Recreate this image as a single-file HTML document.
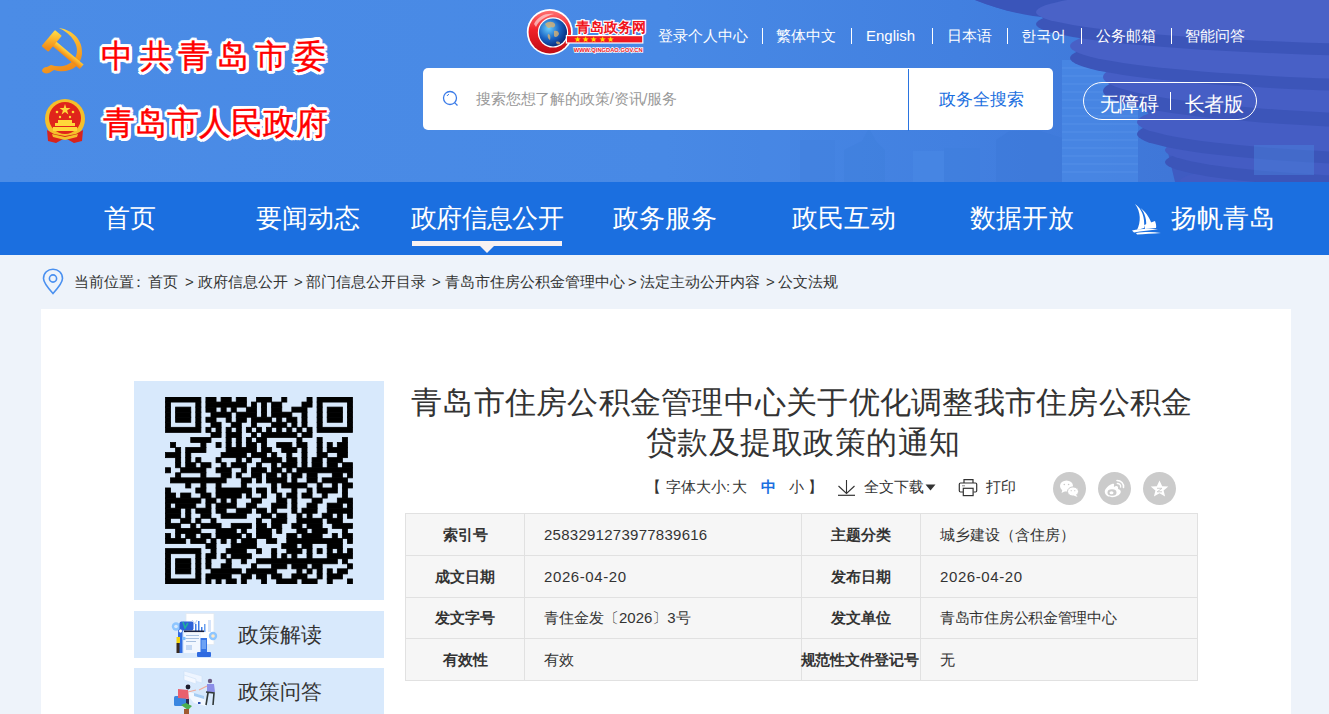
<!DOCTYPE html>
<html><head><meta charset="utf-8">
<style>
*{margin:0;padding:0;box-sizing:border-box}
html,body{width:1329px;height:714px;overflow:hidden;background:#eef3fa;font-family:"Liberation Sans",sans-serif;color:#333}
.abs{position:absolute}
#hdr{position:absolute;left:0;top:0;width:1329px;height:182px;background:#4a8be6;overflow:hidden}
#nav{position:absolute;left:0;top:182px;width:1329px;height:73px;background:#1b6fe0}
.nv{position:absolute;top:0;height:73px;line-height:73px;color:#fff;font-size:25.5px;text-align:center;white-space:nowrap}
.toplink{position:absolute;top:27px;font-size:15px;line-height:18px;color:#fff;white-space:nowrap}
.sep{position:absolute;top:28px;width:1px;height:16px;background:#fff}
.cr{position:absolute;top:273px;font-size:15px;line-height:18px;color:#333;white-space:nowrap}
#crumb{position:absolute;left:74px;top:272px;font-size:15px;line-height:18px;color:#333;white-space:nowrap}
#panel{position:absolute;left:41px;top:309px;width:1250px;height:405px;background:#fff}
#qr{position:absolute;left:134px;top:381px;width:250px;height:219px;background:#d8e9fc}
.btn{position:absolute;left:134px;width:250px;height:47px;background:#d8e9fc}
.btn span{position:absolute;left:104px;top:0;line-height:47px;font-size:21px;color:#333}
.tt{position:absolute;font-size:31px;line-height:40px;color:#333;white-space:nowrap}
#title{position:absolute;left:401px;top:383px;width:800px;text-align:center;font-size:31.25px;line-height:40px;color:#333}
.tl{position:absolute;top:478px;font-size:15px;line-height:18px;color:#333;white-space:nowrap}
#tools{position:absolute;top:478px;font-size:15px;line-height:18px;color:#333;white-space:nowrap}
.share{position:absolute;top:472px;width:33px;height:33px;border-radius:50%;background:#cbcbcb}
table{position:absolute;left:405px;top:513px;width:793px;border-collapse:collapse;background:#f6f6f6}
td{border:1px solid #e1e1e1;height:42px;line-height:20px;font-size:15px;color:#333;padding:0;white-space:nowrap;overflow:visible}
td.l{text-align:center;font-weight:bold}
tr.r3 td{height:41px}
td.v{padding-left:19px}
.logo1{position:absolute;left:101px;top:36px;font-size:31.5px;line-height:40px;color:#f00;-webkit-text-stroke:0.4px #f00;letter-spacing:6.6px;white-space:nowrap;text-shadow:3px 0 0 #fff,-3px 0 0 #fff,0 3px 0 #fff,0 -3px 0 #fff,2.2px 2.2px 0 #fff,-2.2px -2.2px 0 #fff,2.2px -2.2px 0 #fff,-2.2px 2.2px 0 #fff,1.5px 2.8px 0 #fff,-1.5px 2.8px 0 #fff,1.5px -2.8px 0 #fff,-1.5px -2.8px 0 #fff,2.8px 1.5px 0 #fff,-2.8px 1.5px 0 #fff,2.8px -1.5px 0 #fff,-2.8px -1.5px 0 #fff,0 0 2px #fff}
.logo2{position:absolute;left:103px;top:103px;font-size:31.5px;line-height:40px;color:#f00;-webkit-text-stroke:0.4px #f00;letter-spacing:0.1px;white-space:nowrap;text-shadow:3px 0 0 #fff,-3px 0 0 #fff,0 3px 0 #fff,0 -3px 0 #fff,2.2px 2.2px 0 #fff,-2.2px -2.2px 0 #fff,2.2px -2.2px 0 #fff,-2.2px 2.2px 0 #fff,1.5px 2.8px 0 #fff,-1.5px 2.8px 0 #fff,1.5px -2.8px 0 #fff,-1.5px -2.8px 0 #fff,2.8px 1.5px 0 #fff,-2.8px 1.5px 0 #fff,2.8px -1.5px 0 #fff,-2.8px -1.5px 0 #fff,0 0 2px #fff}
#search{position:absolute;left:423px;top:68px;width:630px;height:62px;background:#fff;border-radius:5px}
#search .ph{position:absolute;left:53px;top:0;line-height:62px;font-size:15px;letter-spacing:-0.15px;color:#999;white-space:nowrap}
#search .sbtn{position:absolute;left:485px;top:1px;width:145px;height:62px;border-left:1px solid #2a74e0;line-height:62px;text-align:center;font-size:17px;color:#1b6fe0;white-space:nowrap}
#pill{position:absolute;left:1083px;top:82px;width:174px;height:38px;border:1px solid #fff;border-radius:19px}
#pill span{position:absolute;top:3px;line-height:36px;font-size:20px;letter-spacing:-0.6px;color:#fff;white-space:nowrap}
#pill i{position:absolute;left:86px;top:9px;width:1px;height:18px;background:#fff}
</style></head><body>
<div id="hdr">
<svg class="abs" style="left:0;top:0" width="1329" height="182" viewBox="0 0 1329 182">
<defs>
<linearGradient id="hg" x1="0" y1="0" x2="1" y2="0">
<stop offset="0" stop-color="#4b8ce6"/><stop offset="0.5" stop-color="#4889e5"/><stop offset="0.72" stop-color="#4280e0"/><stop offset="1" stop-color="#3d70d2"/>
</linearGradient>
<linearGradient id="tw" x1="0" y1="0" x2="1" y2="0.3">
<stop offset="0" stop-color="#4a66cc"/><stop offset="1" stop-color="#3f5cc0"/>
</linearGradient>
<linearGradient id="face" x1="0" y1="0" x2="1" y2="0">
<stop offset="0" stop-color="#5a7ad8"/><stop offset="0.6" stop-color="#5070d2"/><stop offset="1" stop-color="#4a66c8"/>
</linearGradient>
</defs>
<rect width="1329" height="182" fill="url(#hg)"/>
<!-- buildings -->
<g>
<path d="M844 182 V150 L862 141 L869 128 L876 141 L885 150 V182Z" fill="#3f7edb" opacity="0.45"/>
<rect x="913" y="151" width="31" height="31" fill="#4a8ae6" opacity="0.5"/>
<rect x="944" y="148" width="36" height="34" fill="#3f7edb" opacity="0.4"/>
<path d="M996 182 V140 L1010 131 H1040 L1062 138 V182Z" fill="#3c78d8" opacity="0.5"/>
<rect x="760" y="130" width="30" height="52" fill="#4a8ae6" opacity="0.35"/>
<rect x="800" y="140" width="35" height="42" fill="#3f7edb" opacity="0.3"/>
</g>
<!-- tower -->
<path d="M975 0 C995 8 1015 14 1036 14 L1075 35 L1110 60 L1140 100 L1165 140 L1175 182 H1329 V0Z" fill="#3f5bc1"/>
<rect x="1062" y="60" width="76" height="122" fill="#4d8eea" opacity="0.55"/>
<g stroke="#6aa2f0" stroke-width="1" opacity="0.35"><path d="M1062 68 H1138 M1062 76 H1138 M1062 84 H1138 M1062 92 H1138 M1062 100 H1138 M1062 108 H1138 M1062 116 H1138 M1062 124 H1138 M1062 132 H1138 M1062 140 H1138 M1062 148 H1138 M1062 156 H1138 M1062 164 H1138 M1062 172 H1138"/></g>
<path d="M975 0 C1000 10 1025 16 1050 18 C1100 20 1200 14 1329 2 V0Z" fill="#3a55ba"/>
<ellipse cx="1520" cy="191.0" rx="340" ry="26" fill="#3c55b9"/>
<ellipse cx="1520" cy="181.0" rx="340" ry="26" fill="#435bc2"/>
<ellipse cx="1520" cy="162.0" rx="355" ry="30" fill="#3c55b9"/>
<ellipse cx="1520" cy="150.0" rx="355" ry="30" fill="#445cc3"/>
<ellipse cx="1520" cy="134.0" rx="383" ry="34" fill="#3c55b9"/>
<ellipse cx="1520" cy="122.0" rx="383" ry="34" fill="#455dc4"/>
<ellipse cx="1520" cy="91.0" rx="417" ry="40" fill="#3c55b9"/>
<ellipse cx="1520" cy="77.0" rx="417" ry="40" fill="#465ec5"/>
<ellipse cx="1520" cy="58.0" rx="450" ry="36" fill="#3c55b9"/>
<ellipse cx="1520" cy="46.0" rx="450" ry="36" fill="#4860c6"/>
<ellipse cx="1520" cy="24.0" rx="484" ry="34" fill="#3c55b9"/>
<ellipse cx="1520" cy="12.0" rx="484" ry="34" fill="#4a62c7"/>
<rect x="1254" y="145" width="60" height="30" fill="#4a80dc" opacity="0.5"/>
</svg>
<!-- party emblem -->
<svg class="abs" style="left:40px;top:26px" width="46" height="48" viewBox="0 0 46 48">
<defs><linearGradient id="gold" x1="0" y1="0" x2="0.3" y2="1"><stop offset="0" stop-color="#ffe04a"/><stop offset="0.5" stop-color="#fcb52c"/><stop offset="1" stop-color="#f08c1a"/></linearGradient></defs>
<path d="M19 2 C33 4 43 14 42 28 C41 40 30 47 18 45 L 14 44 L 9 47 C6 48 3 47 2 45 C2 43 4 41 7 41 L11 39 C20 42 32 40 36 30 C40 20 32 8 19 2 Z" fill="url(#gold)"/>
<g transform="translate(11 15) rotate(40)"><rect x="0" y="-3" width="40" height="6" fill="url(#gold)"/><rect x="-4" y="-11" width="9" height="21" rx="1" fill="url(#gold)"/></g>
</svg>
<!-- national emblem -->
<svg class="abs" style="left:44px;top:98px" width="42" height="46" viewBox="0 0 42 46">
<circle cx="21" cy="21" r="20" fill="#f5c02a"/>
<circle cx="21" cy="20" r="16" fill="#e0251b"/>
<polygon points="21,6 22.3,10 26.5,10 23.1,12.4 24.4,16.4 21,14 17.6,16.4 18.9,12.4 15.5,10 19.7,10" fill="#ffd83a"/>
<circle cx="13" cy="14" r="1.3" fill="#ffd83a"/><circle cx="29" cy="14" r="1.3" fill="#ffd83a"/>
<circle cx="16" cy="19" r="1.2" fill="#ffd83a"/><circle cx="26" cy="19" r="1.2" fill="#ffd83a"/>
<rect x="11" y="25" width="20" height="3" fill="#ffd83a"/><rect x="14" y="22" width="14" height="3" fill="#ffd83a"/>
<rect x="9" y="29" width="24" height="4" fill="#ffd83a"/>
<path d="M3 32 L10 36 L21 38 L32 36 L39 32 L38 43 L30 45 L21 40 L12 45 L4 43 Z" fill="#d8231b"/>
<path d="M8 36 L21 39 L34 36 L33 39 L21 42 L9 39 Z" fill="#f5c02a"/>
</svg>
<div class="logo1">中共青岛市委</div>
<div class="logo2">青岛市人民政府</div>
<!-- qingdao gov logo -->
<svg class="abs" style="left:526px;top:6px" width="124" height="54" viewBox="0 0 124 54">
<defs><radialGradient id="globe" cx="0.35" cy="0.35" r="0.7"><stop offset="0" stop-color="#6ad0ff"/><stop offset="0.55" stop-color="#1a64c4"/><stop offset="1" stop-color="#082a78"/></radialGradient>
<linearGradient id="ring" x1="0" y1="0" x2="0" y2="1"><stop offset="0" stop-color="#ff7070"/><stop offset="0.45" stop-color="#f02028"/><stop offset="1" stop-color="#c00c14"/></linearGradient></defs>
<circle cx="23.8" cy="26.1" r="23" fill="#fff"/>
<circle cx="23.8" cy="26.1" r="21.3" fill="url(#ring)"/>
<path d="M8 18 C12 10 20 7 28 8 C20 10 13 14 10 21Z" fill="#fff" opacity="0.55"/>
<circle cx="27" cy="26.4" r="15.2" fill="#fff"/>
<circle cx="27" cy="26.4" r="14" fill="url(#globe)"/>
<path d="M19 18 C22 15 27 15 29 18 C30 21 27 22 25 21 C23 23 21 22 19 18Z M28 25 C30 24 33 25 33 28 C32 31 29 32 28 30Z M22 28 C24 28 25 31 24 34 C22 33 21 30 22 28Z M30 36 C32 35 35 36 34 38 C32 39 30 38 30 36Z" fill="#d8b070" opacity="0.8"/>
<rect x="40.4" y="29.6" width="76.4" height="7.4" fill="#f01820" stroke="#fff" stroke-width="1.2"/>
<text x="49.5" y="26.3" font-size="14" font-weight="bold" fill="#f0141c" stroke="#fff" stroke-width="2.2" paint-order="stroke" style="font-family:'Liberation Sans',sans-serif">青岛政务网</text>
<text x="47.5" y="35.8" font-size="8" fill="#ffe000" letter-spacing="1.4" style="font-family:'Liberation Sans',sans-serif">★★★★★</text>
<text x="47.7" y="45.5" font-size="6" fill="#f0141c" font-weight="bold" stroke="#fff" stroke-width="1.4" paint-order="stroke" style="font-family:'Liberation Sans',sans-serif" textLength="69" lengthAdjust="spacingAndGlyphs">WWW.QINGDAO.GOV.CN</text>
</svg>
<div class="toplink" style="left:658px">登录个人中心</div><div class="sep" style="left:762px"></div>
<div class="toplink" style="left:776px">繁体中文</div><div class="sep" style="left:851px"></div>
<div class="toplink" style="left:866px">English</div><div class="sep" style="left:932px"></div>
<div class="toplink" style="left:947px">日本语</div><div class="sep" style="left:1007px"></div>
<div class="toplink" style="left:1021px">한국어</div><div class="sep" style="left:1081px"></div>
<div class="toplink" style="left:1096px">公务邮箱</div><div class="sep" style="left:1171px"></div>
<div class="toplink" style="left:1185px">智能问答</div>
<div id="search">
<svg class="abs" style="left:19px;top:22px" width="18" height="18" viewBox="0 0 18 18"><circle cx="8" cy="8" r="6.5" fill="none" stroke="#3a7be8" stroke-width="1.3"/><path d="M12.6 12.6 L15.5 15.5" stroke="#3a7be8" stroke-width="1.3"/><path d="M5 6 A3.5 3.5 0 0 1 7 4.3" stroke="#3a7be8" stroke-width="1" fill="none"/></svg>
<div class="ph">搜索您想了解的政策/资讯/服务</div>
<div class="sbtn">政务全搜索</div>
</div>
<div id="pill"><span style="left:16px">无障碍</span><i></i><span style="left:101px">长者版</span></div>
</div>
<div id="nav">
  <div class="nv" style="left:41px;width:178px">首页</div>
  <div class="nv" style="left:219px;width:178px">要闻动态</div>
  <div class="nv" style="left:398px;width:178px;letter-spacing:-0.7px">政府信息公开</div>
  <div class="abs" style="left:412px;top:59px;width:150px;height:5px;background:#f7f1f2"></div>
  <svg class="abs" style="left:479px;top:63px" width="16" height="8" viewBox="0 0 16 8"><path d="M0 0 H16 L8 8Z" fill="#f7f1f2"/></svg>
  <div class="nv" style="left:576px;width:178px">政务服务</div>
  <div class="nv" style="left:755px;width:178px">政民互动</div>
  <div class="nv" style="left:933px;width:178px">数据开放</div>
  <div class="nv" style="left:1171px;width:auto">扬帆青岛</div>
  <svg class="abs" style="left:1131px;top:21px" width="32" height="32" viewBox="0 0 32 32">
  <path d="M4 1 C11 6 14 14 13 25 L6 27 C10 19 10 9 4 1Z" fill="#fff"/>
  <path d="M9.5 5 C16 10 20 17 21 23 L15 25 C16 17 14 10 9.5 5Z" fill="#fff"/>
  <path d="M13 22 L24 18 C25 21 25.5 23 25 25 L14 26Z" fill="#fff"/>
  <path d="M1 27.5 C8 26 18 25 27 26.5 C20 27 10 28 3 29.5Z" fill="#fff"/>
  <path d="M5 30 C12 29 21 28.5 30 30 C22 30.5 13 31 6 31.5Z" fill="#fff"/>
  </svg>
</div>
<div class="cr" style="left:74px">当前位置</div><div class="cr" style="left:131px">：</div><div class="cr" style="left:148px">首页</div><div class="cr" style="left:185px">&gt;</div><div class="cr" style="left:198px">政府信息公开</div><div class="cr" style="left:294px">&gt;</div><div class="cr" style="left:306px">部门信息公开目录</div><div class="cr" style="left:432px">&gt;</div><div class="cr" style="left:445px">青岛市住房公积金管理中心</div><div class="cr" style="left:628px">&gt;</div><div class="cr" style="left:640px">法定主动公开内容</div><div class="cr" style="left:766px">&gt;</div><div class="cr" style="left:778px">公文法规</div><svg class="abs" style="left:41px;top:268px" width="24" height="27" viewBox="0 0 24 27"><path d="M12 25.5 C7 20 2.5 15 2.5 10.5 C2.5 5 6.8 1.2 12 1.2 C17.2 1.2 21.5 5 21.5 10.5 C21.5 15 17 20 12 25.5Z" fill="none" stroke="#4a90f0" stroke-width="1.6"/><circle cx="12" cy="10.5" r="3.6" fill="none" stroke="#4a90f0" stroke-width="1.6"/></svg>
<div id="panel"></div>
<div id="qr"></div>
<svg class="abs" style="left:165px;top:397px" width="188" height="187" viewBox="0 0 37 37"><g fill="#000" stroke="#000" stroke-width="0.16"><rect x="0" y="0" width="7" height="1"/><rect x="8" y="0" width="2" height="1"/><rect x="11" y="0" width="2" height="1"/><rect x="14" y="0" width="2" height="1"/><rect x="18" y="0" width="3" height="1"/><rect x="23" y="0" width="1" height="1"/><rect x="28" y="0" width="1" height="1"/><rect x="30" y="0" width="7" height="1"/><rect x="0" y="1" width="1" height="1"/><rect x="6" y="1" width="1" height="1"/><rect x="8" y="1" width="8" height="1"/><rect x="17" y="1" width="1" height="1"/><rect x="19" y="1" width="1" height="1"/><rect x="21" y="1" width="2" height="1"/><rect x="27" y="1" width="2" height="1"/><rect x="30" y="1" width="1" height="1"/><rect x="36" y="1" width="1" height="1"/><rect x="0" y="2" width="1" height="1"/><rect x="2" y="2" width="3" height="1"/><rect x="6" y="2" width="1" height="1"/><rect x="8" y="2" width="2" height="1"/><rect x="11" y="2" width="1" height="1"/><rect x="13" y="2" width="1" height="1"/><rect x="16" y="2" width="2" height="1"/><rect x="19" y="2" width="1" height="1"/><rect x="21" y="2" width="2" height="1"/><rect x="25" y="2" width="3" height="1"/><rect x="30" y="2" width="1" height="1"/><rect x="32" y="2" width="3" height="1"/><rect x="36" y="2" width="1" height="1"/><rect x="0" y="3" width="1" height="1"/><rect x="2" y="3" width="3" height="1"/><rect x="6" y="3" width="1" height="1"/><rect x="9" y="3" width="4" height="1"/><rect x="14" y="3" width="4" height="1"/><rect x="19" y="3" width="1" height="1"/><rect x="21" y="3" width="4" height="1"/><rect x="27" y="3" width="1" height="1"/><rect x="30" y="3" width="1" height="1"/><rect x="32" y="3" width="3" height="1"/><rect x="36" y="3" width="1" height="1"/><rect x="0" y="4" width="1" height="1"/><rect x="2" y="4" width="3" height="1"/><rect x="6" y="4" width="1" height="1"/><rect x="8" y="4" width="2" height="1"/><rect x="12" y="4" width="1" height="1"/><rect x="14" y="4" width="2" height="1"/><rect x="17" y="4" width="4" height="1"/><rect x="22" y="4" width="1" height="1"/><rect x="24" y="4" width="2" height="1"/><rect x="27" y="4" width="1" height="1"/><rect x="30" y="4" width="1" height="1"/><rect x="32" y="4" width="3" height="1"/><rect x="36" y="4" width="1" height="1"/><rect x="0" y="5" width="1" height="1"/><rect x="6" y="5" width="1" height="1"/><rect x="9" y="5" width="2" height="1"/><rect x="13" y="5" width="2" height="1"/><rect x="17" y="5" width="1" height="1"/><rect x="21" y="5" width="3" height="1"/><rect x="25" y="5" width="1" height="1"/><rect x="27" y="5" width="1" height="1"/><rect x="30" y="5" width="1" height="1"/><rect x="36" y="5" width="1" height="1"/><rect x="0" y="6" width="7" height="1"/><rect x="8" y="6" width="1" height="1"/><rect x="10" y="6" width="1" height="1"/><rect x="12" y="6" width="1" height="1"/><rect x="14" y="6" width="1" height="1"/><rect x="16" y="6" width="1" height="1"/><rect x="18" y="6" width="1" height="1"/><rect x="20" y="6" width="1" height="1"/><rect x="22" y="6" width="1" height="1"/><rect x="24" y="6" width="1" height="1"/><rect x="26" y="6" width="1" height="1"/><rect x="28" y="6" width="1" height="1"/><rect x="30" y="6" width="7" height="1"/><rect x="9" y="7" width="2" height="1"/><rect x="12" y="7" width="3" height="1"/><rect x="17" y="7" width="1" height="1"/><rect x="19" y="7" width="7" height="1"/><rect x="27" y="7" width="2" height="1"/><rect x="5" y="8" width="4" height="1"/><rect x="12" y="8" width="1" height="1"/><rect x="14" y="8" width="1" height="1"/><rect x="16" y="8" width="1" height="1"/><rect x="18" y="8" width="2" height="1"/><rect x="26" y="8" width="1" height="1"/><rect x="30" y="8" width="1" height="1"/><rect x="35" y="8" width="1" height="1"/><rect x="1" y="9" width="1" height="1"/><rect x="7" y="9" width="1" height="1"/><rect x="10" y="9" width="1" height="1"/><rect x="12" y="9" width="1" height="1"/><rect x="14" y="9" width="1" height="1"/><rect x="16" y="9" width="2" height="1"/><rect x="19" y="9" width="1" height="1"/><rect x="22" y="9" width="3" height="1"/><rect x="26" y="9" width="2" height="1"/><rect x="30" y="9" width="1" height="1"/><rect x="32" y="9" width="1" height="1"/><rect x="34" y="9" width="2" height="1"/><rect x="2" y="10" width="1" height="1"/><rect x="4" y="10" width="4" height="1"/><rect x="12" y="10" width="6" height="1"/><rect x="19" y="10" width="2" height="1"/><rect x="23" y="10" width="3" height="1"/><rect x="27" y="10" width="1" height="1"/><rect x="30" y="10" width="1" height="1"/><rect x="32" y="10" width="4" height="1"/><rect x="0" y="11" width="3" height="1"/><rect x="4" y="11" width="1" height="1"/><rect x="11" y="11" width="5" height="1"/><rect x="17" y="11" width="3" height="1"/><rect x="21" y="11" width="1" height="1"/><rect x="24" y="11" width="1" height="1"/><rect x="27" y="11" width="1" height="1"/><rect x="30" y="11" width="2" height="1"/><rect x="34" y="11" width="2" height="1"/><rect x="2" y="12" width="1" height="1"/><rect x="4" y="12" width="1" height="1"/><rect x="6" y="12" width="1" height="1"/><rect x="10" y="12" width="1" height="1"/><rect x="14" y="12" width="1" height="1"/><rect x="16" y="12" width="1" height="1"/><rect x="19" y="12" width="4" height="1"/><rect x="24" y="12" width="2" height="1"/><rect x="27" y="12" width="1" height="1"/><rect x="29" y="12" width="2" height="1"/><rect x="32" y="12" width="3" height="1"/><rect x="2" y="13" width="1" height="1"/><rect x="4" y="13" width="2" height="1"/><rect x="7" y="13" width="2" height="1"/><rect x="11" y="13" width="1" height="1"/><rect x="13" y="13" width="3" height="1"/><rect x="18" y="13" width="1" height="1"/><rect x="21" y="13" width="1" height="1"/><rect x="23" y="13" width="3" height="1"/><rect x="27" y="13" width="1" height="1"/><rect x="29" y="13" width="2" height="1"/><rect x="32" y="13" width="2" height="1"/><rect x="35" y="13" width="2" height="1"/><rect x="0" y="14" width="1" height="1"/><rect x="3" y="14" width="5" height="1"/><rect x="10" y="14" width="3" height="1"/><rect x="15" y="14" width="1" height="1"/><rect x="17" y="14" width="3" height="1"/><rect x="21" y="14" width="2" height="1"/><rect x="24" y="14" width="1" height="1"/><rect x="26" y="14" width="11" height="1"/><rect x="2" y="15" width="1" height="1"/><rect x="7" y="15" width="1" height="1"/><rect x="11" y="15" width="2" height="1"/><rect x="14" y="15" width="1" height="1"/><rect x="17" y="15" width="2" height="1"/><rect x="20" y="15" width="2" height="1"/><rect x="23" y="15" width="1" height="1"/><rect x="25" y="15" width="2" height="1"/><rect x="28" y="15" width="2" height="1"/><rect x="33" y="15" width="2" height="1"/><rect x="36" y="15" width="1" height="1"/><rect x="1" y="16" width="11" height="1"/><rect x="15" y="16" width="2" height="1"/><rect x="18" y="16" width="1" height="1"/><rect x="20" y="16" width="4" height="1"/><rect x="25" y="16" width="1" height="1"/><rect x="28" y="16" width="2" height="1"/><rect x="31" y="16" width="5" height="1"/><rect x="4" y="17" width="1" height="1"/><rect x="7" y="17" width="1" height="1"/><rect x="10" y="17" width="1" height="1"/><rect x="15" y="17" width="1" height="1"/><rect x="21" y="17" width="1" height="1"/><rect x="23" y="17" width="5" height="1"/><rect x="30" y="17" width="1" height="1"/><rect x="33" y="17" width="1" height="1"/><rect x="35" y="17" width="2" height="1"/><rect x="0" y="18" width="1" height="1"/><rect x="6" y="18" width="2" height="1"/><rect x="10" y="18" width="7" height="1"/><rect x="18" y="18" width="2" height="1"/><rect x="21" y="18" width="1" height="1"/><rect x="25" y="18" width="1" height="1"/><rect x="28" y="18" width="1" height="1"/><rect x="30" y="18" width="4" height="1"/><rect x="35" y="18" width="1" height="1"/><rect x="0" y="19" width="2" height="1"/><rect x="3" y="19" width="2" height="1"/><rect x="7" y="19" width="2" height="1"/><rect x="10" y="19" width="5" height="1"/><rect x="16" y="19" width="1" height="1"/><rect x="19" y="19" width="1" height="1"/><rect x="22" y="19" width="1" height="1"/><rect x="24" y="19" width="2" height="1"/><rect x="27" y="19" width="2" height="1"/><rect x="31" y="19" width="1" height="1"/><rect x="35" y="19" width="1" height="1"/><rect x="0" y="20" width="7" height="1"/><rect x="8" y="20" width="2" height="1"/><rect x="11" y="20" width="1" height="1"/><rect x="13" y="20" width="1" height="1"/><rect x="17" y="20" width="2" height="1"/><rect x="22" y="20" width="2" height="1"/><rect x="25" y="20" width="1" height="1"/><rect x="29" y="20" width="2" height="1"/><rect x="34" y="20" width="3" height="1"/><rect x="0" y="21" width="1" height="1"/><rect x="2" y="21" width="4" height="1"/><rect x="8" y="21" width="1" height="1"/><rect x="10" y="21" width="4" height="1"/><rect x="16" y="21" width="2" height="1"/><rect x="21" y="21" width="3" height="1"/><rect x="25" y="21" width="1" height="1"/><rect x="28" y="21" width="2" height="1"/><rect x="32" y="21" width="3" height="1"/><rect x="36" y="21" width="1" height="1"/><rect x="0" y="22" width="3" height="1"/><rect x="4" y="22" width="1" height="1"/><rect x="6" y="22" width="3" height="1"/><rect x="10" y="22" width="2" height="1"/><rect x="14" y="22" width="3" height="1"/><rect x="18" y="22" width="2" height="1"/><rect x="21" y="22" width="1" height="1"/><rect x="25" y="22" width="1" height="1"/><rect x="27" y="22" width="3" height="1"/><rect x="32" y="22" width="5" height="1"/><rect x="0" y="23" width="3" height="1"/><rect x="4" y="23" width="1" height="1"/><rect x="7" y="23" width="2" height="1"/><rect x="11" y="23" width="5" height="1"/><rect x="19" y="23" width="2" height="1"/><rect x="22" y="23" width="2" height="1"/><rect x="26" y="23" width="1" height="1"/><rect x="28" y="23" width="1" height="1"/><rect x="31" y="23" width="2" height="1"/><rect x="34" y="23" width="1" height="1"/><rect x="36" y="23" width="1" height="1"/><rect x="0" y="24" width="1" height="1"/><rect x="3" y="24" width="2" height="1"/><rect x="6" y="24" width="1" height="1"/><rect x="9" y="24" width="1" height="1"/><rect x="18" y="24" width="1" height="1"/><rect x="21" y="24" width="3" height="1"/><rect x="26" y="24" width="5" height="1"/><rect x="32" y="24" width="3" height="1"/><rect x="0" y="25" width="3" height="1"/><rect x="5" y="25" width="1" height="1"/><rect x="7" y="25" width="4" height="1"/><rect x="13" y="25" width="4" height="1"/><rect x="18" y="25" width="2" height="1"/><rect x="21" y="25" width="2" height="1"/><rect x="25" y="25" width="2" height="1"/><rect x="28" y="25" width="3" height="1"/><rect x="33" y="25" width="4" height="1"/><rect x="2" y="26" width="5" height="1"/><rect x="10" y="26" width="4" height="1"/><rect x="15" y="26" width="1" height="1"/><rect x="18" y="26" width="3" height="1"/><rect x="22" y="26" width="1" height="1"/><rect x="26" y="26" width="2" height="1"/><rect x="29" y="26" width="3" height="1"/><rect x="35" y="26" width="1" height="1"/><rect x="0" y="27" width="1" height="1"/><rect x="2" y="27" width="1" height="1"/><rect x="4" y="27" width="2" height="1"/><rect x="7" y="27" width="2" height="1"/><rect x="10" y="27" width="5" height="1"/><rect x="16" y="27" width="1" height="1"/><rect x="18" y="27" width="3" height="1"/><rect x="24" y="27" width="2" height="1"/><rect x="27" y="27" width="4" height="1"/><rect x="33" y="27" width="1" height="1"/><rect x="35" y="27" width="2" height="1"/><rect x="0" y="28" width="4" height="1"/><rect x="5" y="28" width="3" height="1"/><rect x="9" y="28" width="1" height="1"/><rect x="11" y="28" width="1" height="1"/><rect x="13" y="28" width="1" height="1"/><rect x="15" y="28" width="3" height="1"/><rect x="20" y="28" width="2" height="1"/><rect x="24" y="28" width="11" height="1"/><rect x="36" y="28" width="1" height="1"/><rect x="8" y="29" width="2" height="1"/><rect x="13" y="29" width="5" height="1"/><rect x="23" y="29" width="3" height="1"/><rect x="27" y="29" width="2" height="1"/><rect x="32" y="29" width="3" height="1"/><rect x="0" y="30" width="7" height="1"/><rect x="9" y="30" width="1" height="1"/><rect x="12" y="30" width="4" height="1"/><rect x="18" y="30" width="1" height="1"/><rect x="21" y="30" width="1" height="1"/><rect x="24" y="30" width="3" height="1"/><rect x="28" y="30" width="1" height="1"/><rect x="30" y="30" width="1" height="1"/><rect x="32" y="30" width="1" height="1"/><rect x="34" y="30" width="1" height="1"/><rect x="36" y="30" width="1" height="1"/><rect x="0" y="31" width="1" height="1"/><rect x="6" y="31" width="1" height="1"/><rect x="8" y="31" width="2" height="1"/><rect x="11" y="31" width="1" height="1"/><rect x="13" y="31" width="4" height="1"/><rect x="21" y="31" width="1" height="1"/><rect x="23" y="31" width="1" height="1"/><rect x="25" y="31" width="1" height="1"/><rect x="28" y="31" width="1" height="1"/><rect x="32" y="31" width="5" height="1"/><rect x="0" y="32" width="1" height="1"/><rect x="2" y="32" width="3" height="1"/><rect x="6" y="32" width="1" height="1"/><rect x="8" y="32" width="1" height="1"/><rect x="12" y="32" width="1" height="1"/><rect x="15" y="32" width="1" height="1"/><rect x="18" y="32" width="16" height="1"/><rect x="35" y="32" width="1" height="1"/><rect x="0" y="33" width="1" height="1"/><rect x="2" y="33" width="3" height="1"/><rect x="6" y="33" width="1" height="1"/><rect x="8" y="33" width="1" height="1"/><rect x="11" y="33" width="2" height="1"/><rect x="17" y="33" width="1" height="1"/><rect x="21" y="33" width="3" height="1"/><rect x="25" y="33" width="3" height="1"/><rect x="29" y="33" width="2" height="1"/><rect x="36" y="33" width="1" height="1"/><rect x="0" y="34" width="1" height="1"/><rect x="2" y="34" width="3" height="1"/><rect x="6" y="34" width="1" height="1"/><rect x="9" y="34" width="6" height="1"/><rect x="16" y="34" width="6" height="1"/><rect x="26" y="34" width="1" height="1"/><rect x="28" y="34" width="1" height="1"/><rect x="30" y="34" width="1" height="1"/><rect x="32" y="34" width="1" height="1"/><rect x="34" y="34" width="2" height="1"/><rect x="0" y="35" width="1" height="1"/><rect x="6" y="35" width="1" height="1"/><rect x="8" y="35" width="5" height="1"/><rect x="15" y="35" width="2" height="1"/><rect x="18" y="35" width="2" height="1"/><rect x="21" y="35" width="2" height="1"/><rect x="25" y="35" width="3" height="1"/><rect x="30" y="35" width="1" height="1"/><rect x="32" y="35" width="3" height="1"/><rect x="0" y="36" width="7" height="1"/><rect x="8" y="36" width="1" height="1"/><rect x="10" y="36" width="1" height="1"/><rect x="12" y="36" width="2" height="1"/><rect x="15" y="36" width="1" height="1"/><rect x="19" y="36" width="1" height="1"/><rect x="22" y="36" width="4" height="1"/><rect x="27" y="36" width="3" height="1"/><rect x="32" y="36" width="1" height="1"/><rect x="36" y="36" width="1" height="1"/></g></svg>
<div class="btn" style="top:611px"><span>政策解读</span></div>
<svg class="abs" style="left:165px;top:611px;filter:blur(0.3px)" width="60" height="47" viewBox="165 611 60 47">
<rect x="186" y="613.5" width="28" height="31" fill="#fff" stroke="#e2e8f0" stroke-width="0.8"/>
<path d="M192 620 L195 624 L197 620" stroke="#aac4ee" stroke-width="0.8" fill="none"/>
<rect x="195" y="624" width="1.5" height="8" fill="#3f7fe8"/><rect x="198" y="621" width="1.5" height="11" fill="#3f7fe8"/><rect x="201" y="627" width="1.5" height="5" fill="#3f7fe8"/><rect x="204" y="624" width="1.5" height="8" fill="#6aa0f0"/>
<rect x="208" y="620" width="3" height="12" fill="#d6e4fa"/>
<circle cx="176" cy="626.5" r="4.2" fill="#8ec6ff"/><circle cx="176" cy="626.5" r="1.8" fill="#d8e9fc"/>
<circle cx="213" cy="636" r="4.2" fill="#8ec6ff"/><circle cx="213" cy="636" r="1.8" fill="#ffe9c8"/>
<rect x="179.5" y="621.5" width="14" height="9" rx="2" fill="#2d62d8"/><path d="M183 622 L185 628 L188 623" stroke="#20b09a" stroke-width="1.5" fill="none"/>
<rect x="184" y="630.5" width="20" height="1.6" fill="#1a2040"/>
<rect x="184" y="633" width="17" height="20" fill="#f2f7ff"/>
<rect x="186" y="635" width="13" height="1" fill="#a8c0e0"/><rect x="186" y="638" width="13" height="1" fill="#a8c0e0"/><rect x="186" y="641" width="10" height="1" fill="#a8c0e0"/><rect x="186" y="645" width="6" height="5" fill="#c4d8f4"/>
<rect x="178" y="630" width="4.5" height="23" fill="#2f6ae0"/><circle cx="180.5" cy="631" r="2" fill="#fff" stroke="#2f6ae0" stroke-width="0.8"/>
<circle cx="184" cy="638.5" r="1.8" fill="#7fc0ff"/>
<rect x="200.5" y="638" width="6.5" height="14" fill="#3574e6"/><rect x="201.5" y="640" width="4.5" height="9" fill="#6da2f4"/>
<rect x="197" y="652" width="14" height="5" rx="1" fill="#2f6ae0"/>
<rect x="176.5" y="637" width="3.5" height="6" fill="#f2d40e"/><rect x="176.5" y="643" width="3" height="10" fill="#3a2a20"/>
</svg>
<div class="btn" style="top:668px"><span>政策问答</span></div>
<svg class="abs" style="left:165px;top:668px;filter:blur(0.3px)" width="60" height="46" viewBox="165 668 60 46">
<path d="M184 671 L202 676 L202 683 L184 678Z" fill="#eef5ff" stroke="#cfe0f6" stroke-width="0.6"/>
<path d="M184 675 L196 679 L196 684 L184 680Z" fill="#f4f8ff" stroke="#cfe0f6" stroke-width="0.6"/>
<path d="M189 692 L200 695 L206 701 L206 706 L194 703 L189 697Z" fill="#f3f8ff"/>
<path d="M194 693 L204 696 L204 699 L194 696Z" fill="#a6cdf4"/><rect x="198" y="702" width="2.5" height="2" fill="#2b4fb0"/>
<rect x="174" y="696" width="12" height="10" rx="1.5" fill="#3a86e0"/>
<path d="M178 689 L188 690 L189 699 L178 698Z" fill="#e8606e"/>
<circle cx="188" cy="687" r="2.4" fill="#1c1c2c"/>
<path d="M188 692 L196 690" stroke="#f0a898" stroke-width="1.2"/>
<rect x="186" y="699" width="3" height="8" fill="#2a2a50"/>
<path d="M181 705 L186 703 L192 706 L188 710Z" fill="#4cb050"/><rect x="184" y="709" width="5" height="5" fill="#a05a30"/>
<circle cx="210" cy="681" r="2.2" fill="#6a5a80"/>
<path d="M207 684 L214 684 L215 692 L207 692Z" fill="#8c8ee8"/>
<path d="M199 690 L207 686" stroke="#f0a898" stroke-width="1.1"/>
<path d="M206 692 L214 693 L213 705 M208 693 L206 705" stroke="#303838" stroke-width="1.6" fill="none"/>
</svg>
<div class="tt" style="left:411px;top:383px;letter-spacing:0.25px">青岛市住房公积金管理中心关于优化调整我市住房公积金</div><div class="tt" style="left:646px;top:423px;letter-spacing:0.45px">贷款及提取政策的通知</div>
<div class="tl" style="left:646px">【</div><div class="tl" style="left:666px">字体大小:</div><div class="tl" style="left:732px">大</div><div class="tl" style="left:761px;color:#1b6fe0;font-weight:bold">中</div><div class="tl" style="left:789px">小</div><div class="tl" style="left:808px">】</div>
<svg class="abs" style="left:837px;top:479px" width="19" height="18" viewBox="0 0 19 18"><path d="M9.5 1 V14.5 M1.5 7 L9.5 14.5 L17.5 7" fill="none" stroke="#333" stroke-width="1.1"/><path d="M1 16.3 H18" stroke="#333" stroke-width="1.2"/></svg>
<div id="tools" style="left:864px">全文下载</div>
<svg class="abs" style="left:925px;top:484px" width="11" height="7" viewBox="0 0 11 7"><path d="M0.5 0.5 H10.5 L5.5 6.5Z" fill="#333"/></svg>
<svg class="abs" style="left:958px;top:478px" width="20" height="19" viewBox="0 0 20 19"><path d="M6 5 V1.7 H15 V5" fill="none" stroke="#333" stroke-width="1.2"/><path d="M5.5 14 H2.5 C1.8 14 1.3 13.5 1.3 12.8 V6.3 C1.3 5.6 1.8 5 2.5 5 H17.5 C18.2 5 18.7 5.6 18.7 6.3 V12.8 C18.7 13.5 18.2 14 17.5 14 H15.5" fill="none" stroke="#333" stroke-width="1.2"/><rect x="5.3" y="10.3" width="9.8" height="7.3" fill="#fff" stroke="#333" stroke-width="1.2"/><path d="M4 7.8 H7" stroke="#888" stroke-width="1"/></svg>
<div id="tools" style="left:986px">打印</div>
<svg class="abs" style="left:1053px;top:472px" width="33" height="33" viewBox="0 0 33 33"><circle cx="16.5" cy="16.5" r="16.5" fill="#cbcbcb"/>
<ellipse cx="13.5" cy="14" rx="6.5" ry="5.5" fill="#fff"/><path d="M9.5 17.5 L8.5 21 L12.5 19Z" fill="#fff"/>
<ellipse cx="20" cy="19.5" rx="5.5" ry="4.6" fill="#fff" stroke="#cbcbcb" stroke-width="1"/><path d="M23 22.5 L24.5 25 L20.5 23.5Z" fill="#fff"/>
<circle cx="11.3" cy="12.5" r="0.8" fill="#cbcbcb"/><circle cx="15.6" cy="12.5" r="0.8" fill="#cbcbcb"/><circle cx="18.2" cy="18.7" r="0.6" fill="#cbcbcb"/><circle cx="21.8" cy="18.7" r="0.6" fill="#cbcbcb"/></svg>
<svg class="abs" style="left:1098px;top:472px" width="33" height="33" viewBox="0 0 33 33"><circle cx="16.5" cy="16.5" r="16.5" fill="#cbcbcb"/>
<path d="M14 12 C9 14 6 18 7 21 C8 25 14 26 18 24.5 C22 23 24 20 22 18 C21 17 20 17.5 20 16.5 C20.5 14.5 19 13.5 17 14.5 C16 15 15.5 14.5 16 13.5 C16.5 11.5 15.5 11.3 14 12Z" fill="#fff"/>
<ellipse cx="14" cy="20.5" rx="4.5" ry="3.2" fill="#cbcbcb"/><ellipse cx="13.5" cy="20.8" rx="2" ry="1.5" fill="#fff"/>
<path d="M19 8.5 C23 8.5 26 11.5 25.5 15.5" fill="none" stroke="#fff" stroke-width="1.6" stroke-linecap="round"/><path d="M19.3 11.5 C21.5 11.5 23 13 22.6 15" fill="none" stroke="#fff" stroke-width="1.4" stroke-linecap="round"/></svg>
<svg class="abs" style="left:1143px;top:472px" width="33" height="33" viewBox="0 0 33 33"><circle cx="16.5" cy="16.5" r="16.5" fill="#cbcbcb"/>
<polygon points="16.5,8.5 19.2,14.3 25.3,14.6 20.6,18.4 22.1,24.5 16.5,21.2 10.9,24.5 12.4,18.4 7.7,14.6 13.8,14.3" fill="#fff"/><path d="M14 16.3 H19 L14.2 19.8 H19" fill="none" stroke="#cbcbcb" stroke-width="0.9"/></svg>
<table>
<colgroup><col style="width:119px"><col style="width:277px"><col style="width:119px"><col style="width:277px"></colgroup>
<tr><td class="l">索引号</td><td class="v" style="letter-spacing:0.26px">2583291273977839616</td><td class="l">主题分类</td><td class="v">城乡建设（含住房）</td></tr>
<tr><td class="l">成文日期</td><td class="v" style="letter-spacing:0.6px">2026-04-20</td><td class="l">发布日期</td><td class="v" style="letter-spacing:0.6px">2026-04-20</td></tr>
<tr class="r3"><td class="l">发文字号</td><td class="v">青住金发〔2026〕3号</td><td class="l">发文单位</td><td class="v" style="letter-spacing:-0.3px">青岛市住房公积金管理中心</td></tr>
<tr><td class="l">有效性</td><td class="v">有效</td><td class="l"><span style="display:inline-block;width:119px;text-align:center;letter-spacing:-0.25px;margin-left:-3px">规范性文件登记号</span></td><td class="v">无</td></tr>
</table>
</body></html>
